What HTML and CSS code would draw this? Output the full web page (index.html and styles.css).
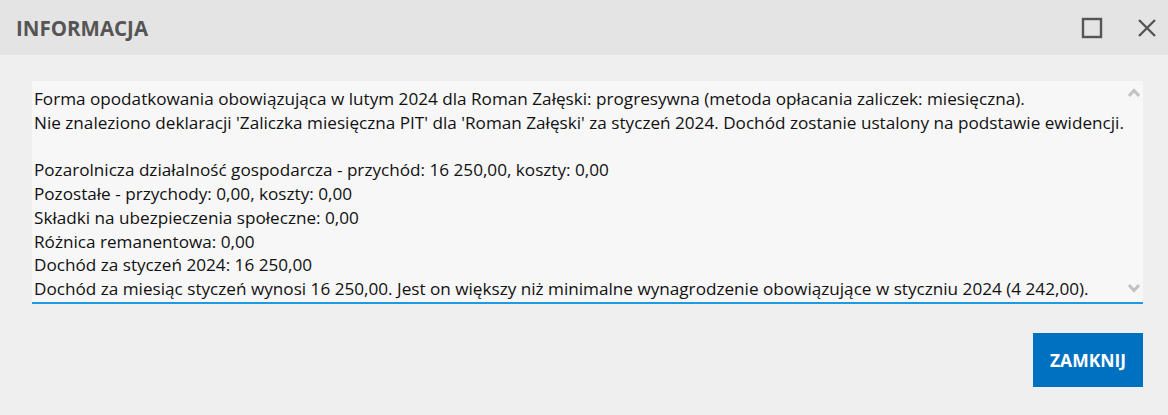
FILE: index.html
```html
<!DOCTYPE html>
<html lang="pl">
<head>
    <meta charset="UTF-8">
    <title>Informacja</title>
    <link rel="stylesheet" href="styles.css">
</head>
<body>
    <div class="dialog">
        <div class="dialog-header">
            <h1 class="dialog-title">INFORMACJA</h1>
            <div class="window-buttons">
                <svg class="win-icon" width="22" height="22" viewBox="0 0 22 22">
                    <rect x="2" y="2" width="18" height="18" fill="none" stroke="#555" stroke-width="2.4"/>
                </svg>
                <svg class="win-icon" width="22" height="22" viewBox="0 0 22 22">
                    <path d="M3 3 L19 19 M19 3 L3 19" stroke="#555" stroke-width="2.4" fill="none"/>
                </svg>
            </div>
        </div>

        <div class="dialog-body">
            <div class="message-box">
                <div class="message-text">Forma opodatkowania obowiązująca w lutym 2024 dla Roman Załęski: progresywna (metoda opłacania zaliczek: miesięczna).
Nie znaleziono deklaracji 'Zaliczka miesięczna PIT' dla 'Roman Załęski' za styczeń 2024. Dochód zostanie ustalony na podstawie ewidencji.

Pozarolnicza działalność gospodarcza - przychód: 16 250,00, koszty: 0,00
Pozostałe - przychody: 0,00, koszty: 0,00
Składki na ubezpieczenia społeczne: 0,00
Różnica remanentowa: 0,00
Dochód za styczeń 2024: 16 250,00
Dochód za miesiąc styczeń wynosi 16 250,00. Jest on większy niż minimalne wynagrodzenie obowiązujące w styczniu 2024 (4 242,00).</div>
                <div class="scrollbar">
                    <svg width="12" height="9" viewBox="0 0 12 9">
                        <path d="M1 8 L6 2.5 L11 8" stroke="#c2c2c2" stroke-width="3" fill="none"/>
                    </svg>
                    <svg width="12" height="9" viewBox="0 0 12 9">
                        <path d="M1 1 L6 6.5 L11 1" stroke="#c2c2c2" stroke-width="3" fill="none"/>
                    </svg>
                </div>
            </div>
        </div>

        <div class="dialog-footer">
            <button class="btn-close">ZAMKNIJ</button>
        </div>
    </div>
</body>
</html>
```

FILE: styles.css
```css
html, body {
    margin: 0;
    padding: 0;
}

body {
    font-family: 'Open Sans', 'Noto Sans', sans-serif;
    background: #efefef;
    color: #111;
    width: 1168px;
    height: 415px;
    overflow: hidden;
}

.dialog-header {
    height: 55px;
    background: #e4e4e4;
    display: flex;
    align-items: center;
    justify-content: space-between;
    padding: 0 10px 0 16px;
}

.dialog-title {
    margin: 0;
    font-size: 20.5px;
    font-weight: 700;
    color: #555;
    letter-spacing: 0;
}

.window-buttons {
    display: flex;
    gap: 33px;
    align-items: center;
}

.win-icon {
    display: block;
}

.dialog-body {
    padding: 26px 25px 0 32px;
}

.message-box {
    height: 221px;
    background: #f7f7f7;
    border-bottom: 2px solid #1e9ae0;
    display: flex;
}

.message-text {
    flex: 1;
    white-space: pre-wrap;
    font-size: 17.15px;
    line-height: 23.75px;
    padding: 6px 0 0 2px;
    overflow: hidden;
}

.scrollbar {
    width: 12px;
    display: flex;
    flex-direction: column;
    justify-content: space-between;
    padding: 7px 3px 9px 0;
}

.scrollbar svg {
    display: block;
}

.dialog-footer {
    display: flex;
    justify-content: flex-end;
    padding: 29px 25px 0 0;
}

.btn-close {
    width: 110px;
    height: 54px;
    background: #0070c0;
    color: white;
    border: none;
    font-family: 'Open Sans', sans-serif;
    font-size: 17.5px;
    font-weight: 700;
    cursor: pointer;
}
```
